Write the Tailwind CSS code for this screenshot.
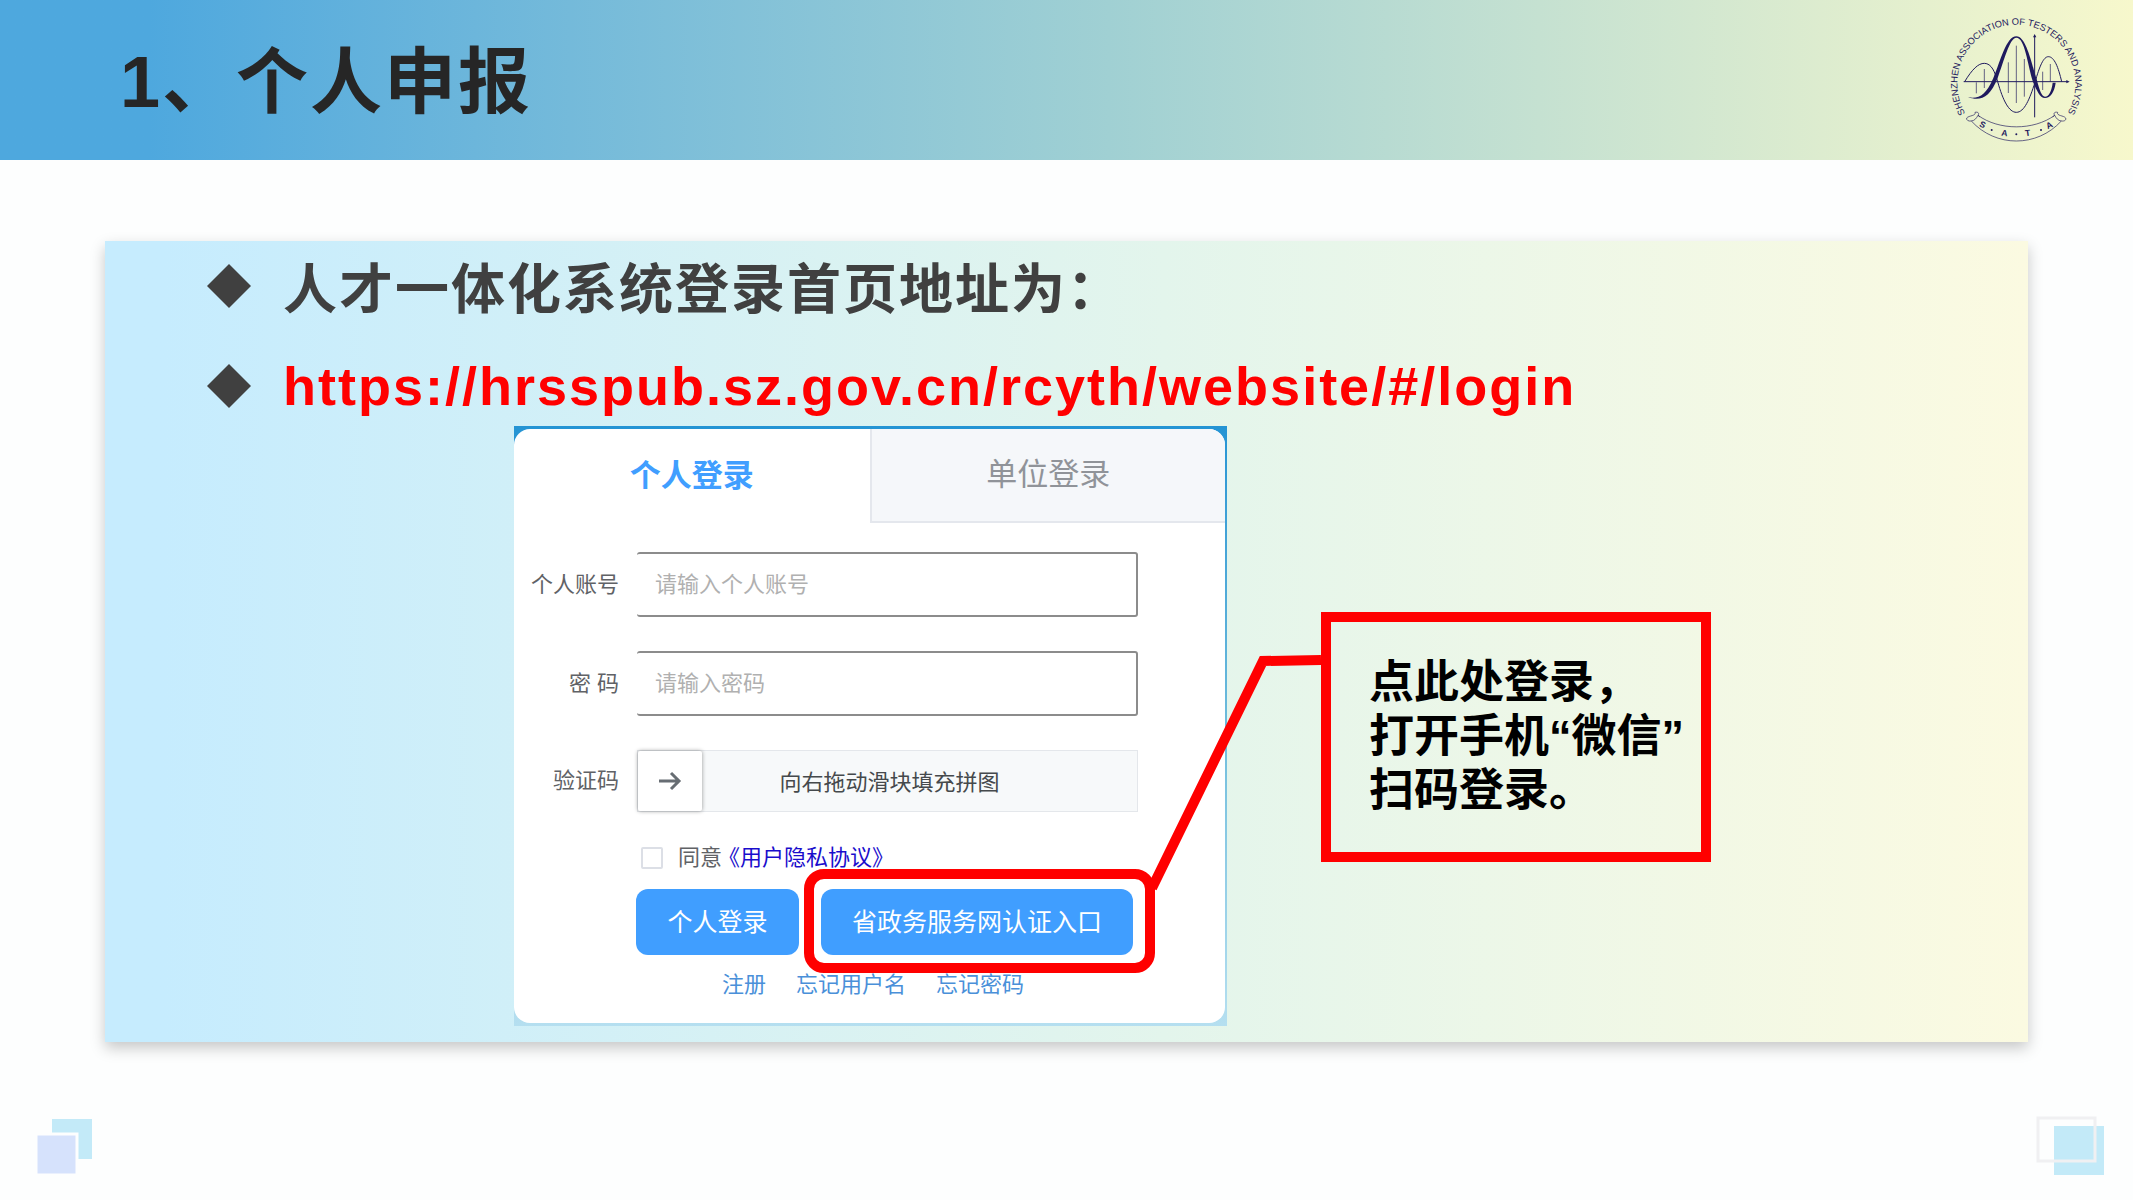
<!DOCTYPE html>
<html lang="zh-CN">
<head>
    <meta charset="UTF-8">
    <meta name="viewport" content="width=device-width, initial-scale=1.0">
    <title>个人申报</title>
    <script src="https://cdn.jsdelivr.net/npm/@tailwindcss/browser@4"></script>
</head>
<body class="flex min-h-screen flex-col bg-[#fdfefe] font-['Liberation_Sans','Noto_Sans_CJK_SC',sans-serif]">
    <header class="flex h-40 items-center justify-between bg-linear-to-r from-[#4ea8de] from-7% via-[#a0d0d3] via-52% to-[#f7f8cc] pl-30 pr-[50px]">
        <h1 class="pt-1 text-[72px] leading-[80px] font-bold tracking-[2px] text-[#262626]">1、个人申报</h1>
        <!-- association logo -->
        <svg class="h-32 w-[134px]" viewBox="60 46 402 384" fill="none" stroke="#1f1a5e" stroke-width="3" role="img" aria-label="SATA">
            <path id="ring" stroke="none" d="M109 338A177 177 0 1 1 415 338"/>
            <text fill="#1f1a5e" stroke="none" font-size="28" font-family="Liberation Sans"><textPath href="#ring">SHENZHEN ASSOCIATION OF TESTERS AND ANALYSIS</textPath></text>
            <path d="M104 243H414M317 350V108"/>
            <path fill="#1f1a5e" stroke="none" d="M412 238L422 243L412 248ZM312 110L317 100L322 110Z"/>
            <path stroke-width="2" d="M142 245V278M166 205V262M238 185V277M262 135V307M286 175V288M341 213V268M364 190V243"/>
            <path d="M107 243C130 205 148 188 166 188C188 188 198 215 206 243C222 300 240 335 262 335C286 335 302 295 318 245C332 195 344 168 358 168C376 168 388 200 398 243"/>
            <path fill="#1f1a5e" stroke="none" d="M117 290C150 295 170 285 193 232C215 180 232 107 262 107C292 107 308 190 323 236C332 270 338 288 348 288C360 288 368 270 371 246L380 246C376 275 364 292 348 292C332 292 324 270 312 244C295 190 288 111 262 111C242 111 225 180 206 232C182 292 155 302 117 290Z"/>
            <g stroke-width="2">
                <path d="M147 344C210 390 314 390 377 344M127 361C200 441 324 441 397 361"/>
                <path d="M147 344C152 337 146 333 138 335C142 346 120 344 113 352C112 359 118 362 127 361C137 360 142 353 147 344L153 349M377 344C372 337 378 333 386 335C382 346 404 344 410 352C412 359 406 362 397 361C387 360 382 353 377 344L371 349"/>
            </g>
            <g fill="#1f1a5e" stroke="none" font-size="26" font-weight="bold" font-family="Liberation Sans" text-anchor="middle">
                <text transform="translate(157 380) rotate(26)">S</text>
                <text transform="translate(225 406) rotate(8)">A</text>
                <text transform="translate(297 406) rotate(-8)">T</text>
                <text transform="translate(365 382) rotate(-26)">A</text>
                <circle cx="188" cy="388" r="3"/><circle cx="262" cy="401" r="3"/><circle cx="336" cy="388" r="3"/>
            </g>
        </svg>
    </header>

    <main class="px-[105px] pt-[81px]">
        <section class="bg-linear-to-r from-[#c6ecfe] from-3% via-[#e3f5ec] via-55% to-[#fbfae1] pt-[5px] pb-4 shadow-[0_6px_14px_rgba(0,0,0,0.22)]">
            <ul class="flex flex-col gap-5 pl-[102px] text-[54px] leading-[80px] font-bold tracking-[2px]">
                <li class="flex items-center gap-8 text-[#404040]">
                    <svg class="size-11 shrink-0" viewBox="0 0 44 44" fill="#404040"><path d="M22 0L44 22L22 44L0 22Z"/></svg>
                    <span class="pt-1 -mb-1">人才一体化系统登录首页地址为：</span>
                </li>
                <li class="flex items-center gap-8">
                    <svg class="size-11 shrink-0" viewBox="0 0 44 44" fill="#404040"><path d="M22 0L44 22L22 44L0 22Z"/></svg>
                    <a href="https://hrsspub.sz.gov.cn/rcyth/website/#/login" class="text-[#ff0000]">https://hrsspub.sz.gov.cn/rcyth/website/#/login</a>
                </li>
            </ul>

            <div class="flex items-start pl-[409px]">
                <!-- login panel -->
                <div class="w-[713px] shrink-0 bg-linear-to-b from-[#2494d4] via-[#6dbcdc] to-[#b5dff0] pt-[3px] pr-0.5 pb-[3px]">
                    <div class="overflow-hidden rounded-2xl bg-white">
                        <div class="grid h-[94px] grid-cols-2 text-[31px]">
                            <button class="font-bold text-[#409eff]">个人登录</button>
                            <button class="border-b-2 border-l-2 border-[#e4e7ed] bg-[#f5f7fa] text-[#909399]">单位登录</button>
                        </div>
                        <form class="pt-[29px] pr-[87px] pb-6 text-[22px] leading-7 text-[#606266]">
                            <div class="grid grid-cols-[105px_1fr] items-center gap-x-[18px] gap-y-[34px] text-right">
                                <label for="account">个人账号</label>
                                <input id="account" type="text" placeholder="请输入个人账号" class="h-[65px] w-full rounded-[3px] border-2 border-l-0 border-[#8c8c8c] bg-white px-[18px] placeholder:text-[#b0b0b0]">
                                <label for="password">密 码</label>
                                <input id="password" type="password" placeholder="请输入密码" class="h-[65px] w-full rounded-[3px] border-2 border-l-0 border-[#8c8c8c] bg-white px-[18px] placeholder:text-[#b0b0b0]">
                                <span>验证码</span>
                                <div class="flex h-[62px] items-center border border-[#e4e7eb] bg-[#f7f9fa] text-[#45494c]">
                                    <button type="button" aria-label="拖动滑块" class="flex h-[60px] w-16 items-center justify-center rounded-xs bg-white shadow-[0_0_4px_rgba(0,0,0,0.4)]">
                                        <svg class="h-5 w-6" viewBox="0 0 24 20" fill="none" stroke="#676d73" stroke-width="3"><path d="M1 10H21M13 2L21 10L13 18"/></svg>
                                    </button>
                                    <span class="flex-1 pt-1 pr-15 text-center">向右拖动滑块填充拼图</span>
                                </div>
                            </div>
                            <div class="pl-[122px]">
                                <div class="mt-8 flex items-center pl-[5px]">
                                    <input id="agree" type="checkbox" class="mr-[15px] size-[22px] appearance-none rounded-xs border-2 border-[#dcdfe6] bg-white">
                                    <label for="agree">同意</label>
                                    <a href="#" class="-ml-1 text-[#1a0dcc]">《用户隐私协议》</a>
                                </div>
                                <div class="mt-[17px] flex gap-[22px] text-[25px] text-white">
                                    <button type="button" class="h-[66px] w-[163px] rounded-xl bg-[#409eff]">个人登录</button>
                                    <div class="relative">
                                        <button type="button" class="h-[66px] w-[312px] rounded-xl bg-[#409eff]">省政务服务网认证入口</button>
                                        <div class="pointer-events-none absolute -top-5 -right-[22px] -bottom-[18px] -left-[17px] z-10 rounded-[20px] border-[10px] border-[#ff0000]"></div>
                                    </div>
                                </div>
                                <div class="mt-4 flex gap-[30px] pl-[86px] text-[#4a90d9]">
                                    <a href="#">注册</a>
                                    <a href="#">忘记用户名</a>
                                    <a href="#">忘记密码</a>
                                </div>
                            </div>
                        </form>
                    </div>
                </div>

                <!-- callout with its leader line -->
                <div class="relative mt-[186px] ml-[94px] w-[390px] shrink-0 border-[10px] border-[#ff0000] py-[34px] pl-[38px]">
                    <p class="text-[45px] leading-[54px] font-bold text-black">点此处登录，<br>打开手机“微信”<br>扫码登录。</p>
                    <svg class="pointer-events-none absolute top-[30px] right-full z-10 mr-[10px] h-[250px] w-[180px]" viewBox="0 0 180 250" fill="none" stroke="#ff0000" stroke-width="10">
                        <path d="M180 8L122 9L11 236"/>
                    </svg>
                </div>
            </div>
        </section>
    </main>

    <footer class="mt-auto flex items-end justify-between pr-7 pb-6 pl-[33px]">
        <svg class="h-[60px] w-[64px]" viewBox="0 0 64 60">
            <path fill="#c3eaf8" d="M19 3H59V43H19Z"/>
            <path fill="#d6e2fc" stroke="#fdfefe" stroke-width="3" d="M3 18H44V59H3Z"/>
        </svg>
        <svg class="h-[60px] w-[76px]" viewBox="0 0 76 60">
            <path fill="#c3eaf8" d="M25 10H75V59H25Z"/>
            <path fill="none" stroke="#f0f0f2" stroke-width="3" d="M9 2H66V45H9Z"/>
        </svg>
    </footer>
</body>
</html>
